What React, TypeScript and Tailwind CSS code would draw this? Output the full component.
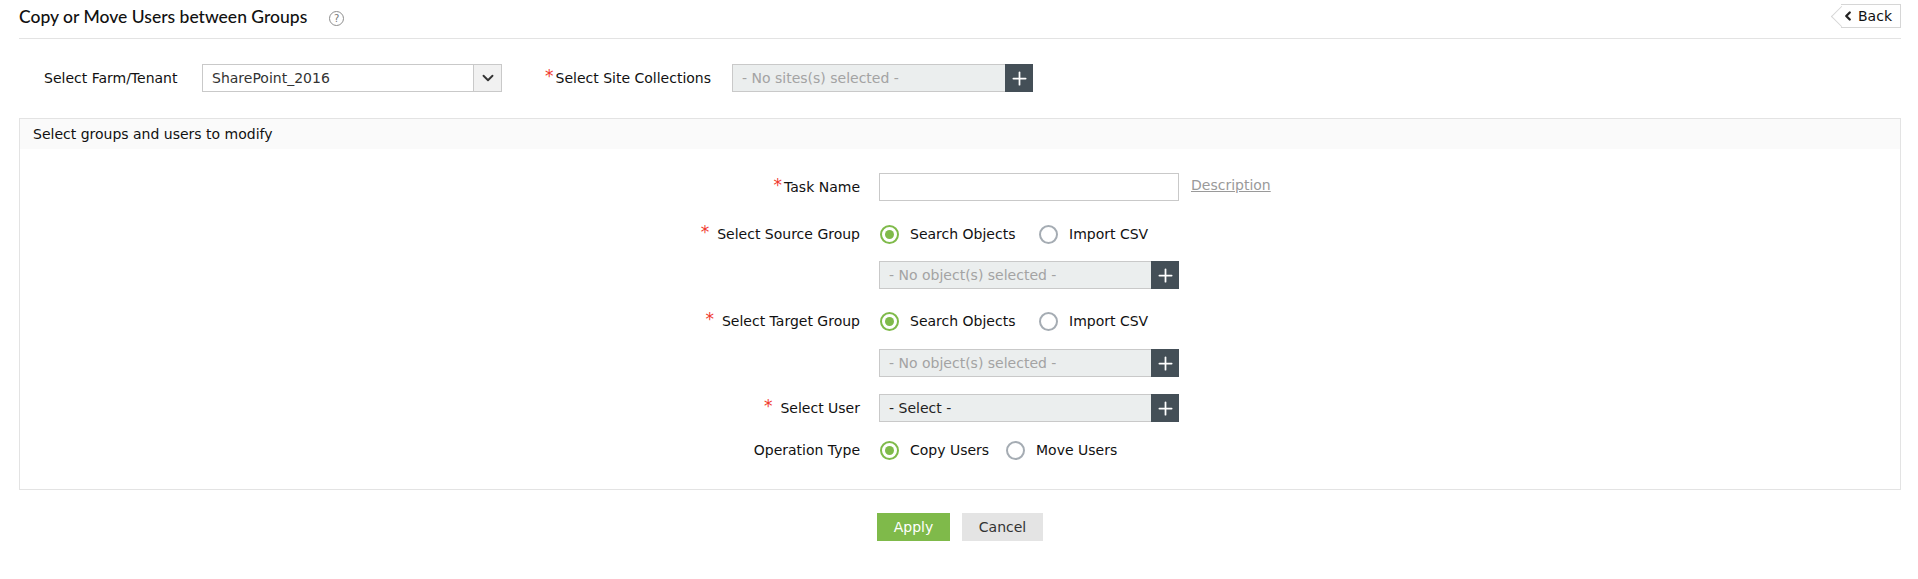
import { ChevronDown, ChevronLeft, Plus } from 'lucide-react';
import type { ReactNode } from 'react';

const bodyFont = "font-['DejaVu_Sans',sans-serif] text-[14px] text-[#111]";

function Star() {
  return <span className="text-[17px] leading-none text-[#f03a2e] relative top-[-1px]">*</span>;
}

function PickField({ text, muted = true, width = 'w-[300px]' }: { text: string; muted?: boolean; width?: string }) {
  return (
    <div className={`flex h-[28px] ${width}`}>
      <div
        className={`flex-1 flex items-center pl-[9px] bg-[#ebeeee] border border-[#c9c9c9] border-r-0 ${
          muted ? 'text-[#a3a3a3]' : 'text-[#222]'
        }`}
      >
        {text}
      </div>
      <div className="w-[28px] bg-[#444f57] flex items-center justify-center">
        <Plus size={21} strokeWidth={2} className="text-white" />
      </div>
    </div>
  );
}

function Radio({ checked, label, width }: { checked?: boolean; label: string; width?: string }) {
  return (
    <div className={`flex items-center pl-[1px] ${width ?? ''}`}>
      <span
        className={`w-[19px] h-[19px] rounded-full border-2 flex items-center justify-center ${
          checked ? 'border-[#7fba4a]' : 'border-[#a5acb3]'
        }`}
      >
        {checked && <span className="w-[9px] h-[9px] rounded-full bg-[#7fba4a]" />}
      </span>
      <span className="ml-[11px]">{label}</span>
    </div>
  );
}

function Row({ label, star, spaced, className, children }: { label?: string; star?: boolean; spaced?: boolean; className?: string; children: ReactNode }) {
  return (
    <div className={`flex items-center ${className ?? ''}`}>
      <div className="w-[859px] text-right pr-[19px] whitespace-nowrap">
        {star && <Star />}
        {star && <span className={spaced ? 'inline-block w-[8px]' : 'inline-block w-[2px]'} />}
        {label}
      </div>
      {children}
    </div>
  );
}

export default function App() {
  return (
    <div className={`${bodyFont} w-[1918px] h-[579px] bg-white overflow-hidden`}>
      <div className="ml-[19px] mr-[17px] h-[39px] border-b border-[#e3e3e3] flex items-start justify-between">
        <div className="flex items-center h-[34px]">
          <h1 className="font-['Lato',sans-serif] text-[17.5px] font-medium text-[#111]">Copy or Move Users between Groups</h1>
          <span className="ml-[22px] mt-[3px] w-[15px] h-[15px] rounded-full border border-[#8d8d8d] text-[10px] leading-none text-[#777] flex items-center justify-center">
            ?
          </span>
        </div>
        <div className="relative mt-[4px] h-[24px] w-[60px] border border-l-0 border-[#d6d6d6] flex items-center">
          <span className="absolute left-[-7px] top-[4px] w-[15px] h-[15px] rotate-45 border-l border-b border-[#d6d6d6] bg-white" />
          <ChevronLeft size={14} strokeWidth={4} className="relative text-[#222]" />
          <span className="relative ml-[3px]">Back</span>
        </div>
      </div>

      <div className="flex items-center h-[28px] mt-[25px] ml-[44px]">
        <div className="w-[158px] whitespace-nowrap">Select Farm/Tenant</div>
        <div className="flex h-[28px] w-[300px] border border-[#c9c9c9] text-[#333]">
          <div className="flex-1 flex items-center pl-[9px]">SharePoint_2016</div>
          <div className="w-[28px] border-l border-[#c9c9c9] bg-[#f1f1f1] flex items-center justify-center">
            <ChevronDown size={18} strokeWidth={2.5} className="text-[#333]" />
          </div>
        </div>
        <div className="ml-[43px] w-[187px] whitespace-nowrap">
          <Star />
          <span className="inline-block w-[2px]" />
          Select Site Collections
        </div>
        <PickField text="- No sites(s) selected -" width="w-[301px]" />
      </div>

      <section className="ml-[19px] mr-[17px] mt-[26px] h-[372px] border border-[#e3e3e3]">
        <div className="h-[30px] bg-[#fafafa] flex items-center pl-[13px]">Select groups and users to modify</div>
        <div className="pt-[24px]">
          <Row label="Task Name" star>
            <div className="w-[300px] h-[28px] border border-[#c9c9c9]" />
            <span className="ml-[12px] mt-[-3px] text-[#9a9a9a] underline">Description</span>
          </Row>
          <Row label="Select Source Group" star spaced className="mt-[23px] h-[20px]">
            <Radio checked label="Search Objects" width="w-[159px]" />
            <Radio label="Import CSV" />
          </Row>
          <Row className="mt-[17px]">
            <PickField text="- No object(s) selected -" />
          </Row>
          <Row label="Select Target Group" star spaced className="mt-[22px] h-[20px]">
            <Radio checked label="Search Objects" width="w-[159px]" />
            <Radio label="Import CSV" />
          </Row>
          <Row className="mt-[18px]">
            <PickField text="- No object(s) selected -" />
          </Row>
          <Row label="Select User" star spaced className="mt-[17px]">
            <PickField text="- Select -" muted={false} />
          </Row>
          <Row label="Operation Type" className="mt-[18px] h-[20px]">
            <Radio checked label="Copy Users" width="w-[126px]" />
            <Radio label="Move Users" />
          </Row>
        </div>
      </section>

      <div className="flex mt-[23px] ml-[877px] gap-[12px]">
        <button className="w-[73px] h-[28px] bg-[#7fba4a] text-white">Apply</button>
        <button className="w-[81px] h-[28px] bg-[#e4e4e4] text-[#333]">Cancel</button>
      </div>
    </div>
  );
}
